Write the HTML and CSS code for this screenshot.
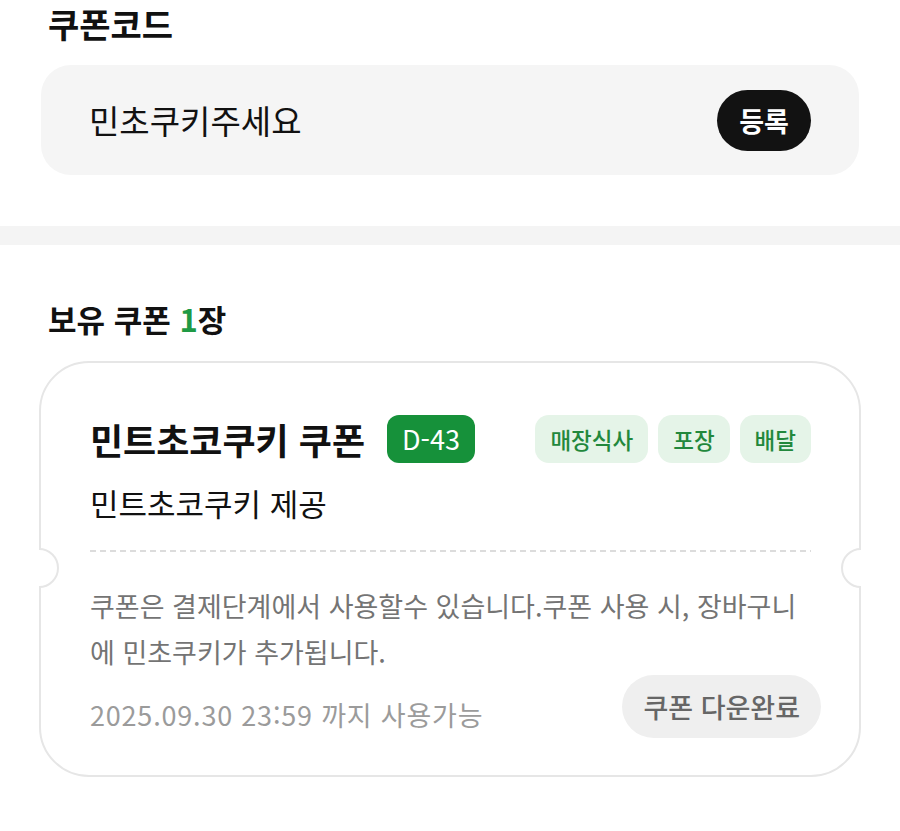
FILE: index.html
```html
<!DOCTYPE html>
<html lang="ko">

<head>
  <meta charset="utf-8">
  <title>쿠폰</title>
  <link rel="stylesheet" href="styles.css">
</head>

<body>
  <section class="section code">
    <h2 class="heading">쿠폰코드</h2>
    <div class="code-box">
      <span class="code-value">민초쿠키주세요</span>
      <button class="register">등록</button>
    </div>
  </section>

  <div class="divider"></div>

  <section class="section owned">
    <h2 class="heading">보유 쿠폰 <span class="count">1</span>장</h2>
    <div class="coupon">
      <div class="coupon-head">
        <h3 class="coupon-name">민트초코쿠키 쿠폰</h3>
        <span class="dday">D-43</span>
        <div class="tags">
          <span class="tag">매장식사</span>
          <span class="tag">포장</span>
          <span class="tag">배달</span>
        </div>
      </div>
      <p class="coupon-sub">민트초코쿠키 제공</p>
      <div class="dash"></div>
      <p class="coupon-desc">쿠폰은 결제단계에서 사용할수 있습니다.쿠폰 사용 시, 장바구니에 민초쿠키가 추가됩니다.</p>
      <div class="coupon-foot">
        <span class="expire">2025.09.30 23:59 까지 사용가능</span>
        <button class="done">쿠폰 다운완료</button>
      </div>
    </div>
  </section>
</body>

</html>
```

FILE: styles.css
```css
body {
  margin: 0;
  background-color: #fff;
  font-family: "Noto Sans CJK KR", "Noto Sans", sans-serif;
  color: #111;
}
.section {
  padding: 0 41px 51px;
}
.owned {
  padding-top: 50px;
}
.heading {
  margin: 0 0 17px 7px;
  font-size: 34px;
  line-height: 48px;
  font-weight: 600;
}
.owned .heading {
  margin-bottom: 18px;
  font-size: 31px;
}
.count {
  color: #1f9a44;
}
.code-box {
  height: 110px;
  display: flex;
  align-items: center;
  justify-content: space-between;
  padding: 0 48px;
  background-color: #f5f5f5;
  border-radius: 30px;
}
.code-value {
  font-size: 33px;
}
.register {
  height: 61px;
  width: 94px;
  border: none;
  border-radius: 31px;
  background-color: #121212;
  color: #fff;
  font-family: inherit;
  font-size: 27px;
  font-weight: 600;
}
.divider {
  height: 19px;
  background-color: #f4f4f4;
}
.coupon {
  position: relative;
  margin: 0 -2px;
  padding: 52px 48px 37px 49px;
  border: 2px solid #e6e6e6;
  border-radius: 50px;
}
.coupon::before,
.coupon::after {
  content: "";
  position: absolute;
  top: 185px;
  width: 36px;
  height: 36px;
  border: 2px solid #e6e6e6;
  border-radius: 50%;
  background-color: #fff;
}
.coupon::before {
  left: -22px;
  clip-path: inset(-2px -2px -2px 50%);
}
.coupon::after {
  right: -22px;
  clip-path: inset(-2px 50% -2px -2px);
}
.coupon-head {
  display: flex;
  align-items: center;
  height: 48px;
}
.coupon-name {
  margin: 0;
  font-size: 36px;
  font-weight: 600;
  line-height: 48px;
}
.dday {
  margin-left: 22px;
  height: 48px;
  padding: 0 15px;
  border-radius: 12px;
  background-color: #16913a;
  color: #fff;
  font-size: 27px;
  line-height: 48px;
}
.tags {
  margin-left: auto;
  display: flex;
  gap: 10px;
}
.tag {
  height: 48px;
  padding: 0 15px;
  border-radius: 14px;
  background-color: #e5f4e8;
  color: #22883c;
  font-size: 22.5px;
  font-weight: 500;
  line-height: 48px;
}
.coupon-sub {
  margin: 20px 0 0;
  font-size: 31px;
  line-height: 40px;
}
.dash {
  margin-top: 27px;
  height: 2px;
  background-image: linear-gradient(to right, #dcdcdc 6px, transparent 6px);
  background-size: 10px 2px;
}
.coupon-desc {
  margin: 31px 0 0;
  max-width: 712px;
  font-size: 27px;
  line-height: 46px;
  color: #747474;
}
.coupon-foot {
  display: flex;
  align-items: flex-end;
  justify-content: space-between;
  margin-right: -10px;
}
.expire {
  font-size: 27px;
  line-height: 46px;
  color: #9b9b9b;
  letter-spacing: 0.8px;
}
.done {
  height: 63px;
  padding: 0 21px;
  border: none;
  border-radius: 32px;
  background-color: #efefef;
  color: #666;
  font-family: inherit;
  font-size: 27px;
  font-weight: 500;
}
```
